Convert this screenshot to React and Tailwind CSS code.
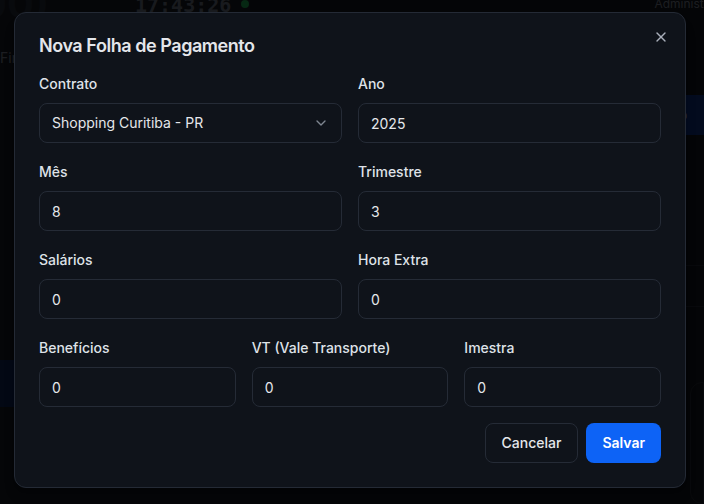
import { X, ChevronDown } from 'lucide-react'

function Field({ label, value, select }) {
  return (
    <div>
      <label className="block text-sm font-medium leading-5 mb-[9px] text-[#dfe2e8]">{label}</label>
      {select ? (
        <div className="h-10 w-full rounded-lg border border-[#252b36] px-3 flex items-center justify-between text-sm text-[#e5e7eb]">
          <span>{value}</span>
          <ChevronDown size={16} className="text-[#9ca3af] opacity-80" />
        </div>
      ) : (
        <input
          type="text" defaultValue={value}
          className="h-10 w-full rounded-lg border border-[#252b36] bg-transparent px-3 text-sm text-[#e5e7eb] focus:outline-none"
        />
      )}
    </div>
  )
}

function App() {
  return (
    <div className="relative h-[504px] w-[704px] overflow-hidden bg-[#161b24] font-['Inter',sans-serif]">

      {/* App behind the dialog */}
      <div className="flex h-full">
        <div className="w-[250px] bg-[#1a1f29] flex flex-col">
          <div className="text-[40px] font-bold leading-none text-[#2c3240] -mt-[16px] -ml-[20px]">00)</div>
          <div className="mt-[24px] text-sm text-[#8a93a3]">Financeiro</div>
          <div className="mt-auto mb-[97px] h-[47px] bg-[#0f2a66]" />
        </div>
        <div className="flex-1 flex flex-col">
          <div className="flex items-start -mt-[10px]">
            <span className="-ml-[115px] font-['DejaVu_Sans_Mono',monospace] text-[20px] font-bold text-[#7b8494]">17:43:26</span>
            <span className="ml-[10px] mt-[10px] w-2 h-2 rounded-full bg-[#22c55e]" />
            <span className="ml-auto mt-[6px] -mr-[30px] whitespace-nowrap text-xs text-[#8a93a3]">Administrador</span>
          </div>
          <div className="flex justify-end mt-[75px]">
            <div className="h-[40px] w-[60px] bg-[#123a94] rounded-l-md px-2 flex items-center text-sm font-semibold text-[#c7cbd3]">Novo</div>
          </div>
          <div className="mt-[130px] border-t border-[#2b313d]" />
          <div className="mt-[40px] border-t border-[#2b313d]" />
          <div className="mt-[75px] ml-auto h-[130px] w-[14px] rounded-l-xl border border-[#2b313d] bg-[#151a23]" />
        </div>
      </div>

      {/* Overlay */}
      <div className="absolute inset-0 bg-black/80" />

      {/* Dialog */}
      <div className="absolute left-[14px] top-[12px] w-[672px] rounded-xl border border-[#242a35] bg-[#0f131a] p-6 shadow-lg">
        <button className="absolute right-4 top-4 text-[#aab0bb]">
          <X size={16} />
        </button>

        <h2 className="text-lg font-semibold leading-none tracking-tight text-[#e4e6eb] mb-[19px]">
          Nova Folha de Pagamento
        </h2>

        <div className="flex flex-col gap-[19px]">
          <div className="grid grid-cols-2 gap-4">
            <Field label="Contrato" value="Shopping Curitiba - PR" select />
            <Field label="Ano" value="2025" />
          </div>
          <div className="grid grid-cols-2 gap-4">
            <Field label="Mês" value="8" />
            <Field label="Trimestre" value="3" />
          </div>
          <div className="grid grid-cols-2 gap-4">
            <Field label="Salários" value="0" />
            <Field label="Hora Extra" value="0" />
          </div>
          <div className="grid grid-cols-3 gap-4">
            <Field label="Benefícios" value="0" />
            <Field label="VT (Vale Transporte)" value="0" />
            <Field label="Imestra" value="0" />
          </div>
        </div>

        <div className="mt-4 flex justify-end gap-2">
          <button className="h-10 px-4 rounded-lg border border-[#252b36] text-sm font-medium text-[#e5e7eb]">
            Cancelar
          </button>
          <button className="h-10 px-4 rounded-lg bg-[#0d63f6] text-sm font-semibold text-white">
            Salvar
          </button>
        </div>
      </div>
    </div>
  )
}

export default App
